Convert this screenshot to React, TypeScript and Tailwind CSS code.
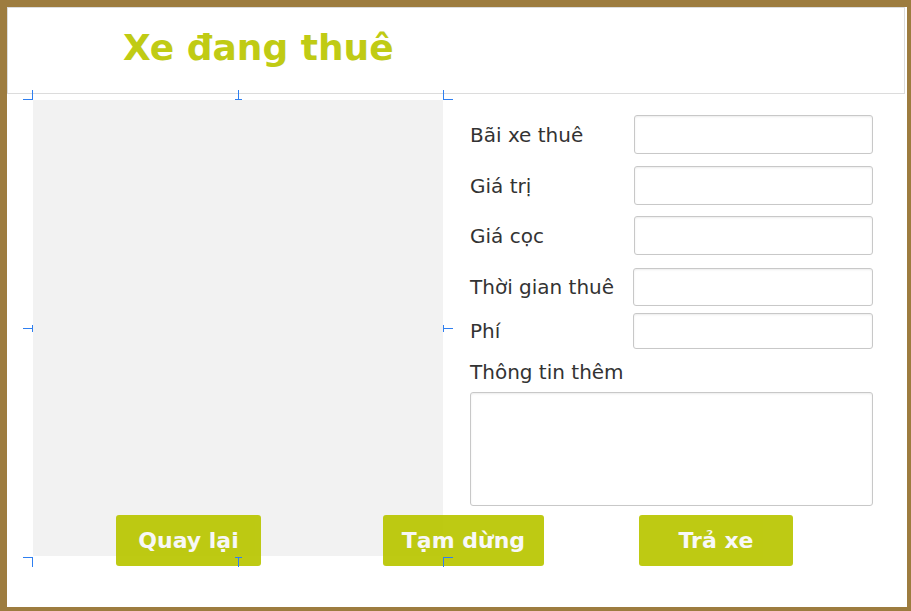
import React from "react";

const fields: { label: string; top: number; h: number; left: number; w: number }[] = [
  { label: "Bãi xe thuê", top: 15, h: 39, left: 164, w: 239 },
  { label: "Giá trị", top: 12, h: 39, left: 164, w: 239 },
  { label: "Giá cọc", top: 11, h: 39, left: 164, w: 239 },
  { label: "Thời gian thuê", top: 13, h: 38, left: 163, w: 240 },
  { label: "Phí", top: 7, h: 36, left: 163, w: 240 },
];

// selection handles drawn around the image box
function Handles() {
  const L = 9.5;
  const M = 215.5;
  const R = 420.5;
  const T = 9.5;
  const C = 238.5;
  const B = 467.5;
  return (
    <svg
      width="431"
      height="478"
      className="absolute left-[-10px] top-[-10px] z-10 pointer-events-none"
      stroke="#2f7ff0"
      strokeWidth="1"
      shapeRendering="crispEdges"
    >
      <path d={`M0 ${T}H${L + 0.5} M${L} 0V${T + 0.5}`} />
      <path d={`M212 ${T}H219 M${M} 0V${T + 0.5}`} />
      <path d={`M${R - 0.5} ${T}H430 M${R} 0V${T + 0.5}`} />
      <path d={`M0 ${C}H${L + 0.5} M${L} 235V242`} />
      <path d={`M${R - 0.5} ${C}H430 M${R} 235V242`} />
      <path d={`M0 ${B}H${L + 0.5} M${L} ${B - 0.5}V477`} />
      <path d={`M212 ${B}H219 M${M} ${B - 0.5}V477`} />
      <path d={`M${R - 0.5} ${B}H430 M${R} ${B - 0.5}V477`} />
    </svg>
  );
}

export default function App() {
  return (
    <div
      className="w-[911px] h-[611px] bg-[#9d7c3f] pt-[7px] pl-[7px] pr-[4px] pb-[4px]"
      style={{ fontFamily: '"DejaVu Sans", "Noto Sans", sans-serif' }}
    >
      <div className="w-[900px] h-[600px] bg-white flex flex-col">
        <header className="w-[898px] h-[87px] border border-[#dcdcdc] shrink-0 pl-[115px] pt-[20px]">
          <h1 className="text-[36px] leading-[40px] font-bold text-[#c0cb14]">
            Xe đang thuê
          </h1>
        </header>

        <div className="flex items-start pt-[6px]">
          <div className="relative ml-[26px]">
            <div className="w-[410px] h-[456px] bg-[#f2f2f2]" />
            <Handles />
          </div>

          <div className="ml-[27px] w-[403px] flex flex-col text-[20px] text-[#333333]">
            {fields.map((f) => (
              <div
                key={f.label}
                className="flex items-center"
                style={{ marginTop: f.top }}
              >
                <label className="shrink-0 leading-[24px]" style={{ width: f.left }}>
                  {f.label}
                </label>
                <input
                  type="text"
                  className="rounded-[3px] border border-[#c8c8c8] bg-white shadow-[inset_0_1px_2px_rgba(0,0,0,0.08)] outline-none"
                  style={{ height: f.h, width: f.w }}
                />
              </div>
            ))}
            <label className="mt-[11px] leading-[24px]">Thông tin thêm</label>
            <textarea className="mt-[8px] w-[403px] h-[114px] rounded-[3px] border border-[#c8c8c8] bg-white shadow-[inset_0_1px_2px_rgba(0,0,0,0.08)] resize-none outline-none" />
          </div>
        </div>

        <div className="relative mt-[-41px] flex text-[22px] font-bold text-[#f8f8f8]">
          <button className="ml-[109px] w-[145px] h-[51px] rounded-[3px] bg-[#b9c600] opacity-[0.92]">
            Quay lại
          </button>
          <button className="ml-[122px] w-[161px] h-[51px] rounded-[3px] bg-[#b9c600] opacity-[0.92]">
            Tạm dừng
          </button>
          <button className="ml-[95px] w-[154px] h-[51px] rounded-[3px] bg-[#b9c600] opacity-[0.92]">
            Trả xe
          </button>
        </div>
      </div>
    </div>
  );
}
